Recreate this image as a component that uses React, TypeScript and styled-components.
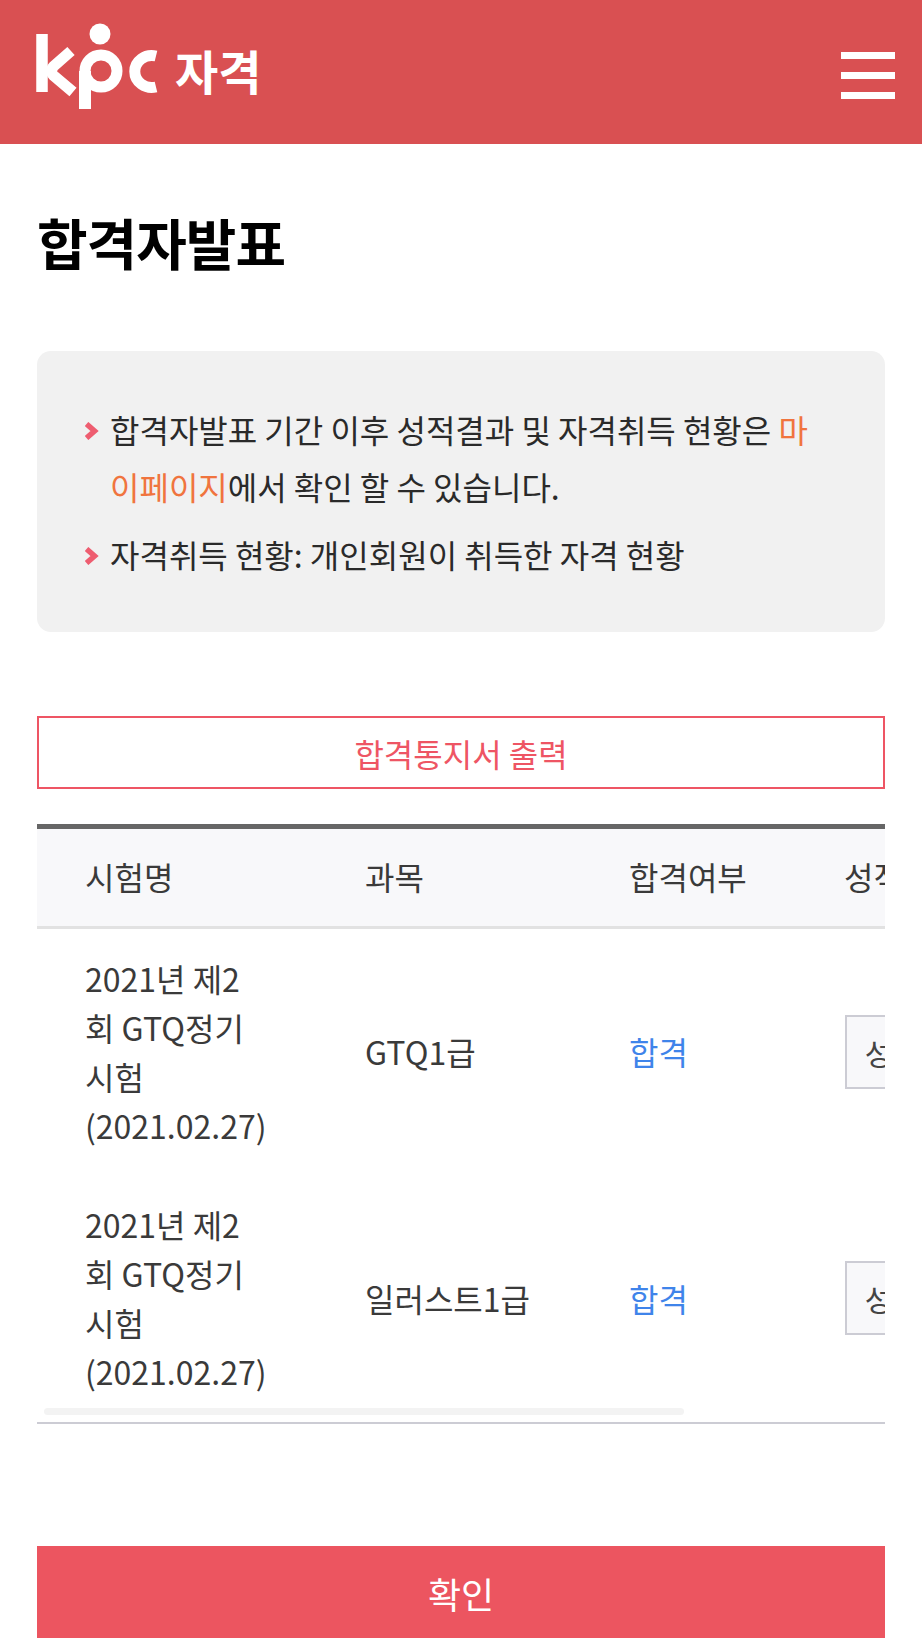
import React from "react";
import styled, { createGlobalStyle } from "styled-components";

const Global = createGlobalStyle`
  html, body { margin: 0; padding: 0; background: #fff; overflow: hidden; }
  body { font-family: "Noto Sans CJK KR", "Noto Sans", sans-serif; color: #222; }
  * { box-sizing: border-box; }
`;
const Page = styled.div`
  width: 922px;
  height: 1638px;
  overflow: hidden;
`;
const Header = styled.header`
  height: 144px;
  background: #d95052;
  display: flex;
  justify-content: space-between;
  align-items: flex-start;
  padding: 22px 27px 0 36px;
`;
const Logo = styled.div`
  display: flex;
  align-items: flex-start;
`;
const LogoText = styled.span`
  margin: 18px 0 0 15px;
  color: #fff;
  font-size: 47px;
  line-height: 60px;
  font-weight: 700;
`;
const Burger = styled.div`
  margin-top: 30px;
  width: 54px;
  display: flex;
  flex-direction: column;
  gap: 13px;
`;
const BurgerBar = styled.span`
  display: block;
  height: 7px;
  background: #fff;
`;
const Main = styled.main`
  padding: 0 37px;
`;
const Title = styled.h1`
  margin: 0;
  padding-top: 61px;
  font-size: 55px;
  line-height: 72px;
  font-weight: 700;
  color: #000;
  letter-spacing: -1px;
`;
const Notice = styled.ul`
  list-style: none;
  margin: 74px 0 0;
  padding: 50px 55px 42px 48px;
  height: 281px;
  background: #f1f1f1;
  border-radius: 14px;
  font-size: 32px;
  line-height: 57px;
  color: #2a2a2a;
`;
const NoticeItem = styled.li`
  position: relative;
  padding-left: 25px;
  margin-bottom: 11px;
  word-break: break-all;
`;
const Chevron = styled.svg`
  position: absolute;
  left: 0;
  top: 21px;
  width: 14px;
  height: 18px;
`;
const Accent = styled.span`
  color: #f0743e;
`;
const PrintButton = styled.button`
  display: block;
  width: 100%;
  height: 73px;
  margin-top: 84px;
  background: #fff;
  border: 2px solid #ee5564;
  color: #ee5564;
  font: 400 32px/1 "Noto Sans CJK KR", sans-serif;
`;
const TableWrap = styled.div`
  position: relative;
  margin-top: 35px;
  overflow: hidden;
  border-bottom: 2px solid #ccccd4;
  height: 600px;
`;
const Table = styled.table`
  width: 1125px;
  table-layout: fixed;
  border-collapse: collapse;
  border-top: 5px solid #666;
`;
const Th = styled.th`
  height: 101px;
  padding: 0 0 3px 48px;
  background: #f8f8fa;
  border-bottom: 3px solid #e2e2e2;
  text-align: left;
  font-size: 32px;
  font-weight: 400;
  color: #3a3a3a;
`;
const Td = styled.td<{ $pass?: boolean }>`
  height: 247px;
  padding: 0 49px 0 48px;
  font-size: 32px;
  line-height: 49px;
  color: ${(p) => (p.$pass ? "#3f84ea" : "#3a3a3a")};
`;
const GradeButton = styled.button`
  display: block;
  width: 150px;
  height: 74px;
  margin-left: 1px;
  background: #f8f8fa;
  border: 2px solid #ccccd4;
  color: #444;
  font: 400 30px/1 "Noto Sans CJK KR", sans-serif;
  white-space: nowrap;
`;
const ScrollThumb = styled.div`
  position: absolute;
  left: 7px;
  bottom: 7px;
  width: 640px;
  height: 7px;
  border-radius: 4px;
  background: #f3f3f3;
`;
const Confirm = styled.button`
  display: block;
  width: 100%;
  height: 93px;
  margin-top: 122px;
  background: #ec5560;
  border: 0;
  color: #fff;
  font: 400 36px/1 "Noto Sans CJK KR", sans-serif;
`;

const rows = ["GTQ1급", "일러스트1급"];
const widths = [280, 264, 215, 215, 151];

const KpcLogo = () => (
  <svg width="124" height="90" viewBox="36 22 124 90" fill="none" stroke="#fff">
    <path d="M42 34V92" strokeWidth="11.5" />
    <path d="M71 51 L54 66 Q49 71 54 76 L73 92" strokeWidth="11" />
    <circle cx="100" cy="34" r="10.5" fill="#fff" stroke="none" />
    <circle cx="101" cy="71" r="16" strokeWidth="11" />
    <path d="M85 71V109" strokeWidth="12" />
    <path d="M156 56 A17 16 0 1 0 156 87" strokeWidth="11" />
  </svg>
);

const Marker = () => (
  <Chevron viewBox="0 0 14 18">
    <path d="M1.5 2 L9.5 9 L1.5 16" fill="none" stroke="#ee5d70" strokeWidth="5.5" />
  </Chevron>
);

export default function App() {
  return (
    <Page>
      <Global />
      <Header>
        <Logo>
          <KpcLogo />
          <LogoText>자격</LogoText>
        </Logo>
        <Burger>
          <BurgerBar />
          <BurgerBar />
          <BurgerBar />
        </Burger>
      </Header>
      <Main>
        <Title>합격자발표</Title>
        <Notice>
          <NoticeItem>
            <Marker />
            합격자발표 기간 이후 성적결과 및 자격취득 현황은 <Accent>마이페이지</Accent>에서 확인 할 수 있습니다.
          </NoticeItem>
          <NoticeItem>
            <Marker />
            자격취득 현황: 개인회원이 취득한 자격 현황
          </NoticeItem>
        </Notice>
        <PrintButton>합격통지서 출력</PrintButton>
        <TableWrap>
          <Table>
            <colgroup>
              {widths.map((w, i) => (
                <col key={i} style={{ width: w }} />
              ))}
            </colgroup>
            <thead>
              <tr>
                <Th>시험명</Th>
                <Th>과목</Th>
                <Th>합격여부</Th>
                <Th>성적</Th>
                <Th>비고</Th>
              </tr>
            </thead>
            <tbody>
              {rows.map((r) => (
                <tr key={r}>
                  <Td>2021년 제2회 GTQ정기시험(2021.02.27)</Td>
                  <Td>{r}</Td>
                  <Td $pass>합격</Td>
                  <Td>
                    <GradeButton>성적확인</GradeButton>
                  </Td>
                  <Td />
                </tr>
              ))}
            </tbody>
          </Table>
          <ScrollThumb />
        </TableWrap>
        <Confirm>확인</Confirm>
      </Main>
    </Page>
  );
}
